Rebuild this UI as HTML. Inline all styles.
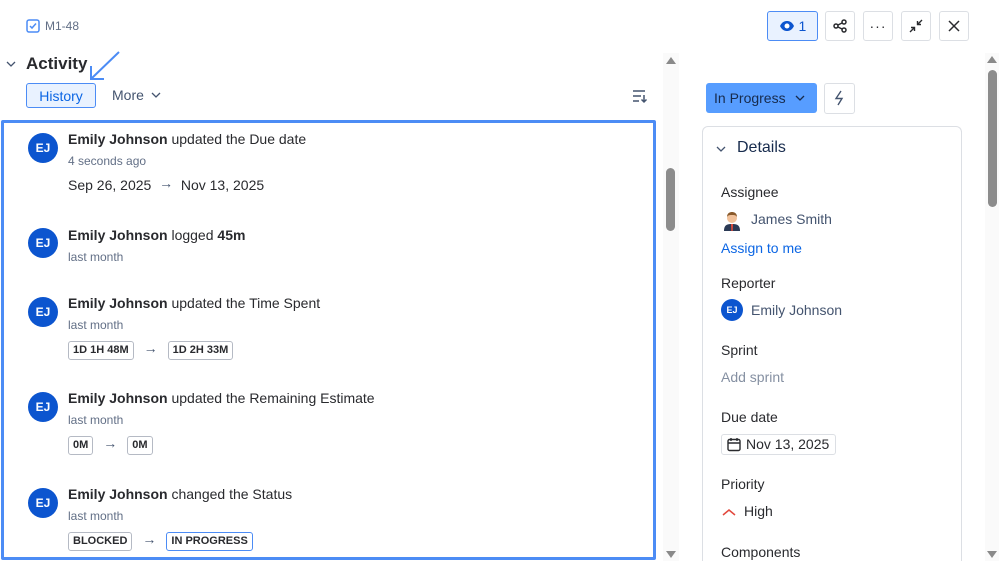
<!DOCTYPE html>
<html><head><meta charset="utf-8"><style>
*{box-sizing:border-box;margin:0;padding:0}
html,body{width:999px;height:561px;overflow:hidden}
body{background:#fff;font-family:"Liberation Sans",sans-serif;color:#292a2e}
#w{position:relative;width:999px;height:561px;overflow:hidden}
.a{position:absolute}
.btn{position:absolute;top:11px;width:30px;height:30px;border:1px solid #dcdfe4;border-radius:3px;background:#fff;display:flex;align-items:center;justify-content:center}
.av{position:absolute;left:28px;width:30px;height:30px;border-radius:50%;background:#0c55cf;color:#fff;font-size:12px;font-weight:bold;display:flex;align-items:center;justify-content:center}
.t{position:absolute;left:68px;font-size:14px;color:#292a2e}
.t b{font-weight:bold}
.s{position:absolute;left:68px;font-size:12px;color:#626f86}
.tag{display:inline-block;border:1px solid #b5bac4;border-radius:3px;font-size:11px;font-weight:bold;padding:2px 4px;color:#292a2e;line-height:13px}
.row{position:absolute;left:68px;display:flex;align-items:center;gap:0}
.ar{margin:0 10px;font-size:14px;line-height:14px;color:#44546f;position:relative;top:-3px}
.lb{position:absolute;left:721px;font-size:14px;color:#292a2e}
.vl{position:absolute;font-size:14px;color:#44546f}
</style></head><body><div id="w">
<svg class="a" style="left:26px;top:19px" width="14" height="14" viewBox="0 0 14 14"><rect x="1" y="1" width="12" height="12" rx="2" fill="none" stroke="#4c8cf5" stroke-width="1.5"/><path d="M4 7l2 2 4-4.5" fill="none" stroke="#4c8cf5" stroke-width="1.5"/></svg>
<div class="a" style="left:45px;top:19px;font-size:12px;color:#626f86">M1-48</div>

<div class="btn" style="left:767px;width:51px;background:#e9f2ff;border-color:#4c8cf5;top:11px;color:#0c55cf;font-size:14px"><svg width="16" height="12" viewBox="0 0 16 12"><path d="M1 6C3 2 5.5 1 8 1s5 1 7 5c-2 4-4.5 5-7 5S3 10 1 6z" fill="#0c55cf"/><circle cx="8" cy="6" r="2.5" fill="#fff"/></svg>&nbsp;1</div>
<div class="btn" style="left:825px"><svg width="14" height="14" viewBox="0 0 14 14" fill="none" stroke="#292a2e" stroke-width="1.5"><circle cx="3" cy="7" r="2"/><circle cx="11" cy="3" r="2"/><circle cx="11" cy="11" r="2"/><path d="M5 6l4-2M5 8l4 2"/></svg></div>
<div class="btn" style="left:863px;font-size:14px;letter-spacing:1px">···</div>
<div class="btn" style="left:901px"><svg width="14" height="14" viewBox="0 0 14 14" fill="none" stroke="#292a2e" stroke-width="1.4"><path d="M1 13l4.5-4.5M2 8.5h3.5V12M13 1L8.5 5.5M8.5 2v3.5H12"/></svg></div>
<div class="btn" style="left:939px"><svg width="14" height="14" viewBox="0 0 14 14" stroke="#292a2e" stroke-width="1.5"><path d="M2 2l10 10M12 2L2 12"/></svg></div>

<svg class="a" style="left:6px;top:60px" width="10" height="8" viewBox="0 0 10 8"><path d="M1 2l4 4 4-4" fill="none" stroke="#44546f" stroke-width="1.3"/></svg>
<div class="a" style="left:26px;top:54px;font-size:17px;font-weight:bold">Activity</div>
<svg class="a" style="left:86px;top:49px" width="36" height="34" viewBox="0 0 36 34"><path d="M33 3L6 29M5 17v13h13" fill="none" stroke="#4c8cf5" stroke-width="2"/></svg>
<div class="a" style="left:26px;top:83px;width:70px;height:25px;border:1px solid #4c8cf5;border-radius:3px;background:#e9f2ff;color:#0c66e4;font-size:14px;display:flex;align-items:center;justify-content:center">History</div>
<div class="a" style="left:112px;top:87px;font-size:14px;color:#44546f">More</div>
<svg class="a" style="left:151px;top:91px" width="10" height="8" viewBox="0 0 10 8"><path d="M1 2l4 4 4-4" fill="none" stroke="#44546f" stroke-width="1.3"/></svg>
<svg class="a" style="left:632px;top:89px" width="16" height="15" viewBox="0 0 16 15" fill="none" stroke="#44546f" stroke-width="1.5"><path d="M1 2h12M1 7h8M1 12h6M12 6v7M9.5 10.5L12 13l2.5-2.5"/></svg>

<div class="a" style="left:1px;top:120px;width:655px;height:440px;border:3px solid #4c8cf5;border-radius:2px"></div>

<div class="av" style="top:133px">EJ</div>
<div class="t" style="top:131px"><b>Emily Johnson</b> updated the Due date</div>
<div class="s" style="top:154px">4 seconds ago</div>
<div class="t" style="top:177px">Sep 26, 2025 &nbsp;<span style="color:#44546f;position:relative;top:-2px">→</span>&nbsp; Nov 13, 2025</div>

<div class="av" style="top:228px">EJ</div>
<div class="t" style="top:227px"><b>Emily Johnson</b> logged <b>45m</b></div>
<div class="s" style="top:250px">last month</div>

<div class="av" style="top:297px">EJ</div>
<div class="t" style="top:295px"><b>Emily Johnson</b> updated the Time Spent</div>
<div class="s" style="top:318px">last month</div>
<div class="row" style="top:341px"><span class="tag">1D 1H 48M</span><span class="ar">→</span><span class="tag">1D 2H 33M</span></div>

<div class="av" style="top:392px">EJ</div>
<div class="t" style="top:390px"><b>Emily Johnson</b> updated the Remaining Estimate</div>
<div class="s" style="top:413px">last month</div>
<div class="row" style="top:436px"><span class="tag">0M</span><span class="ar">→</span><span class="tag">0M</span></div>

<div class="av" style="top:488px">EJ</div>
<div class="t" style="top:486px"><b>Emily Johnson</b> changed the Status</div>
<div class="s" style="top:509px">last month</div>
<div class="row" style="top:532px"><span class="tag">BLOCKED</span><span class="ar">→</span><span class="tag" style="border-color:#4c8cf5">IN PROGRESS</span></div>

<div class="a" style="left:663px;top:53px;width:16px;height:508px;background:#fafafa"></div>
<div class="a" style="left:666px;top:57px;width:0;height:0;border:5px solid transparent;border-bottom:7px solid #8a8a8a;border-top:0"></div>
<div class="a" style="left:666px;top:168px;width:9px;height:63px;border-radius:5px;background:#8c8c8c"></div>
<div class="a" style="left:666px;top:551px;width:0;height:0;border:5px solid transparent;border-top:7px solid #8a8a8a;border-bottom:0"></div>

<div class="a" style="left:706px;top:83px;width:111px;height:30px;background:#579dff;border-radius:3px;color:#172b4d;font-size:14px;padding:7px 0 0 8px">In Progress</div>
<svg class="a" style="left:795px;top:94px" width="10" height="8" viewBox="0 0 10 8"><path d="M1 2l4 4 4-4" fill="none" stroke="#172b4d" stroke-width="1.3"/></svg>
<div class="a" style="left:824px;top:83px;width:31px;height:31px;border:1px solid #dcdfe4;border-radius:3px"></div>
<svg class="a" style="left:833px;top:90px" width="13" height="16" viewBox="0 0 13 16"><path d="M8 1L3 8.5h6L5 15" fill="none" stroke="#44546f" stroke-width="1.4"/></svg>

<div class="a" style="left:702px;top:126px;width:260px;height:435px;border:1px solid #dcdfe4;border-bottom:0;border-radius:6px 6px 0 0"></div>
<svg class="a" style="left:716px;top:145px" width="10" height="8" viewBox="0 0 10 8"><path d="M1 2l4 4 4-4" fill="none" stroke="#44546f" stroke-width="1.3"/></svg>
<div class="a" style="left:737px;top:139px;font-size:16px;color:#172b4d">Details</div>

<div class="lb" style="top:184px">Assignee</div>
<svg class="a" style="left:722px;top:209px" width="20" height="22" viewBox="0 0 20 22"><path d="M2 22c0-6 3-7 8-7s8 1 8 7z" fill="#2b3a55"/><path d="M9 15h2l-.3 7h-1.4z" fill="#e04a3a"/><circle cx="10" cy="9" r="5" fill="#f1c19a"/><path d="M5 8c0-4 3-5 5-5s5 1 5 5c-1-2-3-2-5-2S6 6 5 8z" fill="#8a5a2b"/></svg>
<div class="vl" style="left:751px;top:211px">James Smith</div>
<div class="vl" style="left:721px;top:240px;color:#0c66e4">Assign to me</div>

<div class="lb" style="top:275px">Reporter</div>
<div class="a" style="left:721px;top:299px;width:22px;height:22px;border-radius:50%;background:#0c55cf;color:#fff;font-size:9px;font-weight:bold;display:flex;align-items:center;justify-content:center">EJ</div>
<div class="vl" style="left:751px;top:302px">Emily Johnson</div>

<div class="lb" style="top:342px">Sprint</div>
<div class="vl" style="left:721px;top:369px;color:#8590a2">Add sprint</div>

<div class="lb" style="top:409px">Due date</div>
<div class="a" style="left:721px;top:434px;width:115px;height:21px;border:1px solid #dcdfe4;border-radius:3px"></div>
<svg class="a" style="left:727px;top:437px" width="14" height="15" viewBox="0 0 14 15" fill="none" stroke="#292a2e" stroke-width="1.4"><rect x="1" y="2.5" width="12" height="11" rx="1.5"/><path d="M1 6h12M4 1v3M10 1v3"/></svg>
<div class="vl" style="left:746px;top:436px;color:#292a2e">Nov 13, 2025</div>

<div class="lb" style="top:476px">Priority</div>
<svg class="a" style="left:722px;top:508px" width="14" height="8" viewBox="0 0 14 8"><path d="M1 7l6-5 6 5" fill="none" stroke="#e2483d" stroke-width="1.5"/></svg>
<div class="vl" style="left:744px;top:503px;color:#292a2e">High</div>

<div class="lb" style="top:544px;line-height:16px">Components</div>

<div class="a" style="left:985px;top:53px;width:14px;height:508px;background:#fafafa"></div>
<div class="a" style="left:987px;top:56px;width:0;height:0;border:5px solid transparent;border-bottom:7px solid #8a8a8a;border-top:0"></div>
<div class="a" style="left:988px;top:70px;width:9px;height:137px;border-radius:5px;background:#8c8c8c"></div>
<div class="a" style="left:987px;top:551px;width:0;height:0;border:5px solid transparent;border-top:7px solid #8a8a8a;border-bottom:0"></div>
</div></body></html>
